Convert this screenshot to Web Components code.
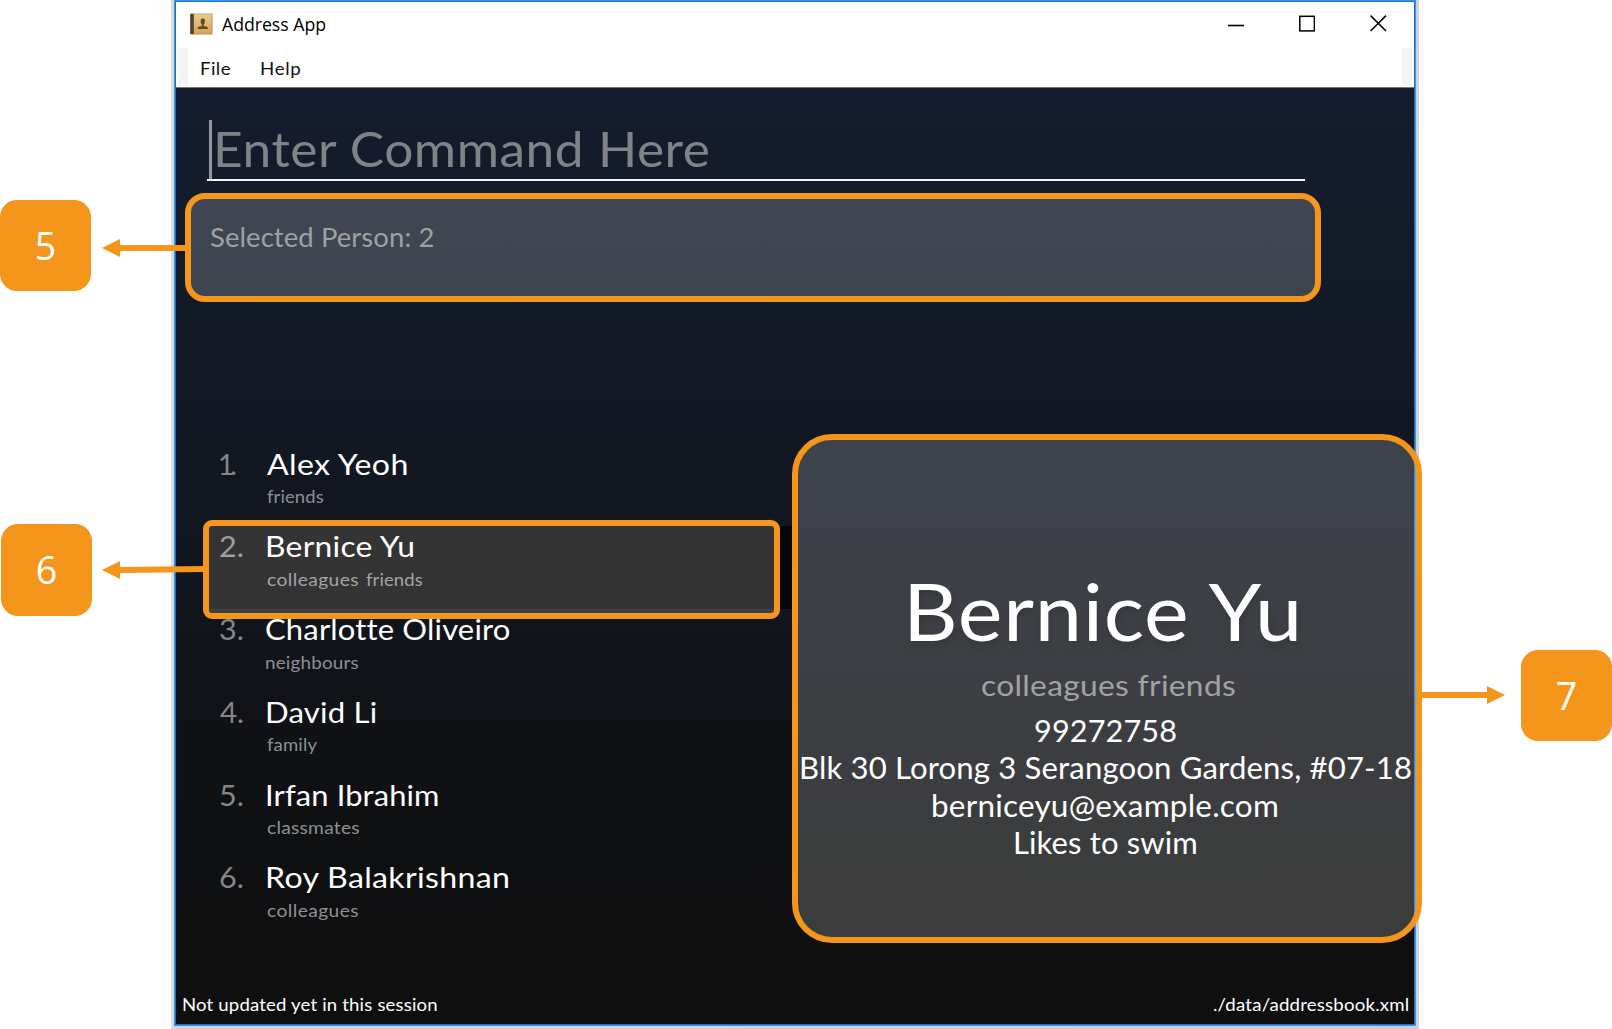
<!DOCTYPE html>
<html lang="en">
<head>
<meta charset="utf-8">
<title>Address App</title>
<style>
html,body{margin:0;padding:0;background:#fff;overflow:hidden}
body{width:1612px;height:1029px;font-family:Lato,"Open Sans",sans-serif}
</style>
</head>
<body>
<app-figure>
  <app-window>
    <title-bar slot="title"></title-bar>
    <menu-bar slot="menu"></menu-bar>
    <command-box slot="command"></command-box>
    <result-display slot="result"></result-display>
    <person-list slot="list">
      <person-card index="1." index-w="16" name="Alex Yeoh" name-w="141" tags="friends:56"></person-card>
      <person-card index="2." index-w="23" name="Bernice Yu" name-w="147.5" name-x="0.8" tags="colleagues:91,friends:56" selected></person-card>
      <person-card index="3." index-w="23" name="Charlotte Oliveiro" name-w="242.5" tags="neighbours:92"></person-card>
      <person-card index="4." index-w="23" name="David Li" name-w="109" name-x="0.8" tags="family:50"></person-card>
      <person-card index="5." index-w="23" name="Irfan Ibrahim" name-w="171" name-x="0.8" tags="classmates:92"></person-card>
      <person-card index="6." index-w="23" name="Roy Balakrishnan" name-w="242" name-x="0.8" tags="colleagues:91"></person-card>
    </person-list>
    <person-details slot="details"></person-details>
    <status-bar slot="status"></status-bar>
  </app-window>
  <call-out style="left:185px;top:193px;width:1136px;height:109px;--r:20px"></call-out>
  <call-out style="left:203px;top:520px;width:577px;height:99px;--r:9px"></call-out>
  <call-out style="left:792px;top:434px;width:630px;height:509px;--r:40px"></call-out>
  <arrow-mark style="left:102px;top:239px" points="0,9 18,0 18,6 84,6 84,12 18,12 18,18"></arrow-mark>
  <arrow-mark style="left:102px;top:561px" points="0,9 18,0 18,6 102,5 102,11 18,12 18,18"></arrow-mark>
  <arrow-mark style="left:1421px;top:686px" points="0,6 66,6 66,0 84,9 66,18 66,12 0,12"></arrow-mark>
  <num-badge style="left:0;top:200px">5</num-badge>
  <num-badge style="left:1px;top:524px;height:92px">6</num-badge>
  <num-badge style="left:1521px;top:650px">7</num-badge>
</app-figure>
<script>
const define = (name, html, setup) => customElements.define(name, class extends HTMLElement {
  connectedCallback() {
    if (this.shadowRoot) return;
    const t = document.createElement('template');
    t.innerHTML = typeof html === 'function' ? html(this) : html;
    this.attachShadow({mode: 'open'}).appendChild(t.content.cloneNode(true));
    if (setup) setup(this);
  }
});

/* One line of text, widened so that its ink spans exactly the "w" attribute:
   mostly by stretching the letters, the rest by tracking. */
const pen = document.createElement('canvas').getContext('2d');
define('fit-text', el => `<style>:host{display:block;white-space:pre;flex:none;text-align:left}span{display:block;transform-origin:0 0}</style><span>${el.getAttribute('text')}</span>`, el => {
  const text = el.getAttribute('text'), w = +el.getAttribute('w'), cs = getComputedStyle(el);
  pen.font = `${cs.fontWeight} ${cs.fontSize} ${cs.fontFamily}`;
  const m = pen.measureText(text);
  const ink = m.actualBoundingBoxLeft + m.actualBoundingBoxRight;
  const sx = Math.min(1.1, Math.max(0.94, 1 + (w / ink - 1) * 0.8));
  const s = el.shadowRoot.querySelector('span');
  el.style.width = w + 'px';
  s.style.width = w + 'px';
  s.style.transform = `scaleX(${sx})`;
  s.style.letterSpacing = (w / sx - ink) / Math.max(1, text.length - 1) + 'px';
  s.style.marginLeft = m.actualBoundingBoxLeft * sx + 'px';
});

define('app-figure', `<style>:host{display:block;position:relative;width:1612px;height:1029px;background:#fff;overflow:hidden}</style><slot></slot>`);

define('app-window', `<style>
:host{display:block;box-sizing:border-box;width:1248px;height:1029px;margin-left:171px;padding:0 3px 3px;background:linear-gradient(90deg,#e4e1df,#d4d2d2 3px,#cfcdcd 1245px,#d6d4d4)}
.frame{box-sizing:border-box;height:1026px;border:1px solid #3d97e6;display:flex;flex-direction:column}
.body{box-sizing:border-box;height:1024px;border:1px solid #1173cc;display:flex;flex-direction:column;background:linear-gradient(#151c2e 86px,#131b29 240px,#121823 430px,#11141b 640px,#0f1012 820px,#0f0f0f)}
.main{display:flex;height:548px}
</style>
<div class="frame"><div class="body"><slot name="title"></slot><slot name="menu"></slot><slot name="command"></slot><slot name="result"></slot>
<div class="main"><slot name="list"></slot><slot name="details"></slot></div><slot name="status"></slot></div></div>`);

define('title-bar', `<style>
:host{display:flex;height:46px;background:#fff;color:#000;font:18px "Open Sans","Noto Sans",sans-serif}
.icon{margin:11px 0 0 13.5px;width:23px;height:22px}
fit-text{margin-left:9px;line-height:24px;padding-top:10px}
.controls{margin-left:auto;display:flex;gap:55px;padding:13px 27px 0 0}
svg{display:block;flex:none}
</style>
<svg class="icon" viewBox="0 0 23 22"><defs><linearGradient id="g" x2="0" y2="1"><stop stop-color="#e8cb92"/><stop offset="1" stop-color="#d9a54b"/></linearGradient></defs>
<rect x="0" y="0.5" width="22.5" height="21" rx="1" fill="#b08f58"/><rect x="4" y="1.2" width="17.6" height="19.4" fill="url(#g)"/><rect x="0.4" y="1" width="3.4" height="20" fill="#51463d"/>
<path d="M10.8 6.2q2-1.2 4 0v3.6l-1.1 1.6v1.6l4.1 1v2H7.8v-2l4.1-1v-1.6l-1.1-1.6z" fill="#5d4a2d"/></svg>
<fit-text text="Address App" w="104"></fit-text>
<div class="controls">
<svg width="16" height="17"><path d="M0 10.5H16" stroke="#000" stroke-width="1.6"/></svg>
<svg width="16" height="17"><rect x="0.8" y="1.3" width="14.6" height="14.6" fill="none" stroke="#000" stroke-width="1.5"/></svg>
<svg width="17" height="17"><path d="M.6 .6L16 16M16 .6L.6 16" stroke="#000" stroke-width="1.5"/></svg>
</div>`);

define('menu-bar', `<style>
:host{display:flex;box-sizing:border-box;height:40px;padding:0 2px;background:#fff;border-bottom:1px solid #70747d;color:#111;font-size:17px;line-height:24px}
.edge{width:10px;height:37.5px;background:#f3f3f3}
.items{flex:1;display:flex;gap:30px;padding:9px 0 0 13.5px}
</style><div class="edge"></div><div class="items"><fit-text text="File" w="29.5"></fit-text><fit-text text="Help" w="39"></fit-text></div><div class="edge"></div>`);

define('command-box', `<style>
:host{display:flex;box-sizing:border-box;width:1098px;height:61px;margin:32px 0 0 31px;border-bottom:2px solid #f4f5f6;color:#808387;font-size:47.5px;line-height:58.5px}
i{width:3px;background:#9597a0;margin:0 5.5px 0 1.5px}
</style><i></i><fit-text text="Enter Command Here" w="492.5"></fit-text>`);

define('result-display', `<style>
:host{display:block;box-sizing:border-box;height:262.4px;padding:37.5px 0 0 34px;color:#8b8c8e;font-size:26.5px;line-height:36px}
</style><fit-text text="Selected Person: 2" w="223"></fit-text>`);

define('person-list', `<style>:host{display:flex;flex-direction:column;width:616px;flex:none}</style><slot></slot>`);

define('person-card', el => `<style>
:host{display:flex;box-sizing:border-box;height:82.75px;margin-left:27px;padding:2.2px 0 0 17px;font-size:29.5px;line-height:36px;color:#fff}
:host([selected]){background:#050607}
.no{width:46.5px;color:#85878a}
.name{margin-left:${el.getAttribute('name-x') || 0}px}
.tags{display:flex;gap:8px;margin-top:3.6px;font-size:17.5px;line-height:24px;color:#8e9093}
</style>
<div class="no"><fit-text text="${el.getAttribute('index')}" w="${el.getAttribute('index-w')}"></fit-text></div>
<div><fit-text class="name" text="${el.getAttribute('name')}" w="${el.getAttribute('name-w')}"></fit-text>
<div class="tags">${el.getAttribute('tags').split(',').map(t => t.split(':')).map(([t, w]) => `<fit-text text="${t}" w="${w}"></fit-text>`).join('')}</div></div>`);

define('person-details', `<style>
:host{display:flex;flex-direction:column;align-items:center;box-sizing:border-box;flex:1;padding:123px 0 0 5px;color:#fff;font-size:30px;line-height:37.5px}
.name{font-size:79px;line-height:90px;text-shadow:1px 4px 7px rgba(0,0,0,.6)}
.tags{font-size:29px;line-height:36px;color:#8d8e90;margin:10.8px 0 8.6px 7px}
</style>
<fit-text class="name" text="Bernice Yu" w="389.5"></fit-text>
<fit-text class="tags" text="colleagues friends" w="253"></fit-text>
<fit-text text="99272758" w="140.5"></fit-text>
<fit-text text="Blk 30 Lorong 3 Serangoon Gardens, #07-18" w="609.5"></fit-text>
<fit-text text="berniceyu@example.com" w="344"></fit-text>
<fit-text text="Likes to swim" w="181"></fit-text>`);

define('status-bar', `<style>
:host{display:flex;justify-content:space-between;padding:1.4px 6.5px 0 7px;color:#fff;font-size:17px;line-height:24px}
</style><fit-text text="Not updated yet in this session" w="254.5"></fit-text><fit-text text="./data/addressbook.xml" w="195"></fit-text>`);

define('call-out', `<style>:host{position:absolute;display:block;box-sizing:border-box;border:6px solid #f4951c;border-radius:var(--r);background:rgba(255,255,255,.188)}</style>`);

define('arrow-mark', el => `<style>:host{position:absolute;display:block}svg{display:block}</style><svg width="104" height="18"><polygon points="${el.getAttribute('points')}" fill="#f4951c"/></svg>`);

define('num-badge', `<style>:host{position:absolute;display:flex;align-items:center;justify-content:center;box-sizing:border-box;width:91px;height:91px;border-radius:17px;background:#f4951c;color:#fff;font:37.5px "Open Sans","Noto Sans",sans-serif;padding-bottom:1px}</style><slot></slot>`);
</script>
</body>
</html>
